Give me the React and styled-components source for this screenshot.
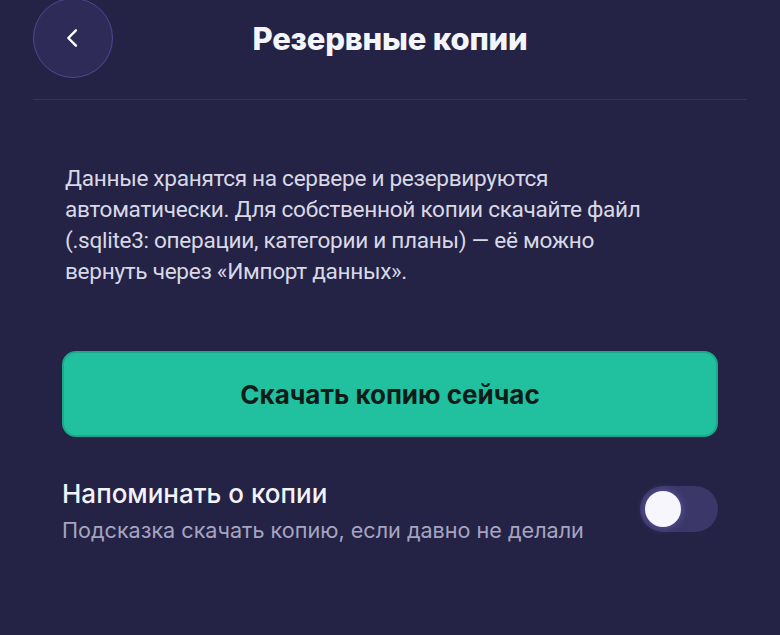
import React, { useState } from 'react';
import styled, { createGlobalStyle } from 'styled-components';

const GlobalStyle = createGlobalStyle`
  html, body {
    margin: 0;
    padding: 0;
    background: #252345;
  }
  body {
    font-family: Inter, "Noto Sans", sans-serif;
    overflow: hidden;
  }
`

const Page = styled.div`
  width: 780px;
  height: 635px;
  background: #252345;
  padding: 0 33px;
  box-sizing: border-box;
`

const Header = styled.div`
  display: grid;
  grid-template-columns: 80px 1fr 80px;
  align-items: center;
  height: 102px;
  margin-top: -2px;
  padding-bottom: 22px;
  box-sizing: border-box;
  border-bottom: 1px solid #34315f;
`

const BackButton = styled.button`
  width: 80px;
  height: 80px;
  border-radius: 50%;
  background: #2e2b59;
  border: 1.5px solid #4d4891;
  display: flex;
  align-items: center;
  justify-content: center;
  padding: 0;
  cursor: pointer;
`

const Title = styled.h1`
  margin: 0;
  text-align: center;
  font-family: Inter, sans-serif;
  font-weight: 800;
  font-size: 31px;
  letter-spacing: -0.2px;
  color: #f4f4fb;
`

const Body = styled.div`
  padding: 63px 29px 0;
`

const Description = styled.p`
  margin: 0 0 64px 3px;
  font-family: Roboto, sans-serif;
  font-size: 22.6px;
  letter-spacing: -0.3px;
  line-height: 31px;
  color: #d8d8e6;
  white-space: nowrap;
`

const PrimaryButton = styled.button`
  width: 100%;
  height: 86px;
  border-radius: 14px;
  background: #21c19f;
  border: 2px solid #1aa98b;
  color: #0c1c18;
  font-family: Inter, sans-serif;
  font-weight: 700;
  font-size: 26px;
  cursor: pointer;
`

const SettingRow = styled.div`
  display: flex;
  align-items: center;
  justify-content: space-between;
  margin-top: 41px;
`

const SettingText = styled.div`
  display: flex;
  flex-direction: column;
  gap: 8px;
`

const SettingTitle = styled.div`
  font-family: Inter, sans-serif;
  font-size: 26px;
  font-weight: 500;
  color: #f2f2f8;
`

const SettingHint = styled.div`
  font-family: Inter, sans-serif;
  font-size: 21.6px;
  color: #a6a5c0;
`

const Switch = styled.button`
  width: 78px;
  height: 46px;
  border-radius: 23px;
  background: #3b3768;
  border: none;
  padding: 0 5px;
  display: flex;
  align-items: center;
  justify-content: ${p => (p.$on ? 'flex-end' : 'flex-start')};
  cursor: pointer;
  margin-top: -4px;
`

const Knob = styled.span`
  width: 36px;
  height: 36px;
  border-radius: 50%;
  background: #f6f6fc;
  box-shadow: 0 0 8px rgba(140, 130, 230, 0.5);
`

export default function App() {
  const [remind, setRemind] = useState(false);
  return (
    <>
      <GlobalStyle />
      <Page>
        <Header>
          <BackButton aria-label="Назад">
            <svg width="28" height="28" viewBox="0 0 24 24" fill="none" stroke="#ffffff" strokeWidth="2.1" strokeLinecap="round" strokeLinejoin="round">
              <path d="M14.5 5.5l-6.5 6.5 6.5 6.5" />
            </svg>
          </BackButton>
          <Title>Резервные копии</Title>
          <div />
        </Header>
        <Body>
          <Description>
            Данные хранятся на сервере и резервируются<br />
            автоматически. Для собственной копии скачайте файл<br />
            (.sqlite3: операции, категории и планы) — её можно<br />
            вернуть через «Импорт данных».
          </Description>
          <PrimaryButton>Скачать копию сейчас</PrimaryButton>
          <SettingRow>
            <SettingText>
              <SettingTitle>Напоминать о копии</SettingTitle>
              <SettingHint>Подсказка скачать копию, если давно не делали</SettingHint>
            </SettingText>
            <Switch $on={remind} onClick={() => setRemind(!remind)}>
              <Knob />
            </Switch>
          </SettingRow>
        </Body>
      </Page>
    </>
  );
}
